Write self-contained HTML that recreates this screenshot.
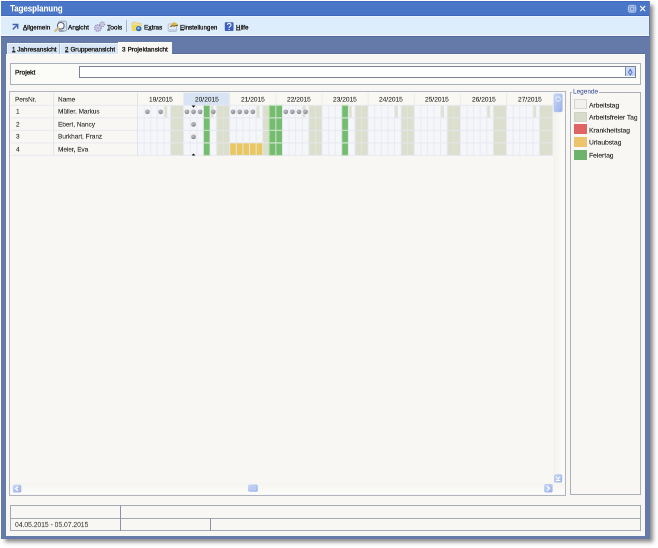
<!DOCTYPE html>
<html><head><meta charset="utf-8"><style>
*{margin:0;padding:0;box-sizing:border-box}
html,body{width:658px;height:548px;overflow:hidden;background:#fff;font-family:"Liberation Sans",sans-serif;color:#333}
.a{position:absolute}
.t{position:absolute;white-space:nowrap;transform-origin:0 0;-webkit-text-stroke:0.7px currentColor;will-change:transform}
.t2{-webkit-text-stroke:0.3px currentColor}
.t3{-webkit-text-stroke:0.2px currentColor}
u{text-decoration:underline;text-decoration-thickness:1.6px;text-underline-offset:0.4px;text-decoration-color:#333}
</style></head><body>
<div class="a" style="left:1.2px;top:1.2px;width:648.6px;height:537.6px;background:#657AA8;box-shadow:3px 3.5px 4px -0.5px rgba(40,40,40,0.55)"></div>
<div class="a" style="left:1.2px;top:1.2px;width:648.3px;height:14.7px;background:linear-gradient(#3F64B4 0,#4A76C8 1.2px,#4A76C8 13.5px,#3E64B0 14.9px)"></div>
<svg class="a" style="left:626px;top:3px" width="24" height="12" viewBox="0 0 24 12">
 <rect x="2.4" y="2.4" width="7.4" height="6.8" rx="1.4" fill="rgba(190,208,245,0.45)" stroke="#BCCDF0" stroke-width="1"/>
 <rect x="4.5" y="4.3" width="3.2" height="3" fill="#6E8CD4" stroke="#B8CAF0" stroke-width="0.9"/>
 <path d="M14.2 3 L19.2 8.2 M19.2 3 L14.2 8.2" stroke="#F4F7FF" stroke-width="1.15"/>
</svg>
<div class="a" style="left:1.2px;top:15.9px;width:648.3px;height:20.8px;background:linear-gradient(#F4F9FF 0,#DEEDFB 1.5px,#DEEDFB 18.2px,#F6FAFF 19.9px);border-bottom:0.7px solid #52689A"></div>
<div class="a" style="left:126.2px;top:19.6px;width:1px;height:12.8px;background:#A9B4C8"></div>
<svg class="a" style="left:0;top:0" width="260" height="36" viewBox="0 0 260 36">
<path d="M12.6 24.5 H17.7 V28.8" stroke="#4862B0" stroke-width="1.5" fill="none"/>
<path d="M12.8 29.4 L17.2 25" stroke="#4862B0" stroke-width="1.5" fill="none"/>
<rect x="58.4" y="21.2" width="8.3" height="9.8" rx="1.6" fill="#D6E2F0" stroke="#8E9CB2" stroke-width="0.9"/>
<circle cx="60.8" cy="25.8" r="3.3" fill="#F6F9FC" stroke="#5E6670" stroke-width="1.1"/>
<path d="M58.2 28.1 L55.2 31" stroke="#D4C080" stroke-width="2.2" stroke-linecap="round"/>
<path d="M59 31.1 H63.5" stroke="#6E7080" stroke-width="0.8"/>
<circle cx="102.2" cy="24.2" r="2.4" fill="#C9C5E2" stroke="#9690B8" stroke-width="1.1" stroke-dasharray="1 0.9"/>
<circle cx="97.9" cy="28" r="3.2" fill="#CCC8E8" stroke="#8C86AE" stroke-width="1.3" stroke-dasharray="1.1 0.9"/>
<circle cx="97.9" cy="28" r="1" fill="#B0AACC"/>
<path d="M131.8 23.5 Q132 22 133.5 22 H136 L137 23 H140.5 Q141.3 23 141.3 24 V30.5 H132.3Z" fill="#EEDC98" stroke="#D6BE70" stroke-width="0.5"/>
<path d="M131.7 25 H137.5 L136.5 31 H132.2Z" fill="#F2D858"/>
<circle cx="138.7" cy="28.6" r="2.6" fill="#2A62C0"/>
<circle cx="138.5" cy="28.3" r="1.2" fill="#7CCBF4"/>
<rect x="168.2" y="24" width="8.4" height="7.4" rx="0.6" fill="#E4ECF6" stroke="#A6B4CC" stroke-width="0.8"/>
<path d="M169.2 30 H176" stroke="#B8C8E0" stroke-width="1.4"/>
<path d="M170.2 26.5 Q172 22.3 174.6 22.2 Q176.8 22.5 178 25.2 Z" fill="#E2B440"/>
<path d="M170.2 26.6 L172.5 25.8 L174 26.2 L178 25.2" stroke="#5A4820" stroke-width="0.9" fill="none"/>
<rect x="224.8" y="22.3" width="8.7" height="8.7" rx="0.8" fill="#3D60BA"/>
<path d="M227.4 25 Q227.6 23.4 229.2 23.4 Q231 23.4 231 25 Q231 26.1 229.6 26.8 Q229.1 27.1 229.1 28" stroke="#E8F0FF" stroke-width="1.2" fill="none"/>
<rect x="228.5" y="28.9" width="1.2" height="1.2" fill="#E8F0FF"/>
</svg>
<div class="a" style="left:6px;top:54px;width:639px;height:481.5px;background:#F8F7F3;border-top:1px solid #FDFDFB;box-shadow:0 -0.7px 0 #55699A"></div>
<div class="a" style="left:6.5px;top:42.8px;width:53px;height:11.4px;background:#D9E6F6;border-top:1px solid #EEF4FB;border-left:1px solid #EEF4FB;border-right:1px solid #A9BAD6"></div>
<div class="a" style="left:59.5px;top:42.8px;width:58px;height:11.4px;background:#D9E6F6;border-top:1px solid #EEF4FB;border-left:1px solid #EEF4FB"></div>
<div class="a" style="left:117.5px;top:42px;width:54px;height:13.2px;background:#F8F7F3;border-top:1px solid #FCFCFA;border-left:1px solid #FCFCFA"></div>
<div class="a" style="left:9.5px;top:62.8px;width:631.5px;height:22.2px;border:1.3px solid #A9AFBB;background:#FBFBF8"></div>
<div class="a" style="left:78.9px;top:65.7px;width:557.6px;height:12.4px;border:1.9px solid #7A8194;background:#fff"></div>
<div class="a" style="left:625px;top:67.4px;width:9.6px;height:9px;background:linear-gradient(#D0DEF8,#BCCEF2);border-left:1.2px solid #7E8AA6"></div>
<svg class="a" style="left:0;top:0" width="658" height="90" viewBox="0 0 658 90"><path d="M630.3 68.6 L632.6 72.2 L630.3 75.8 L628 72.2 Z" fill="#4C6CC4"/><ellipse cx="630.3" cy="72.2" rx="1.1" ry="1.5" fill="#B4C8F2"/></svg>
<div class="a" style="left:9.2px;top:91.4px;width:556.4px;height:404.2px;border:1.6px solid #B0B5C0;background:#F8F7F3"></div>
<svg class="a" style="left:0;top:0" width="658" height="548" viewBox="0 0 658 548">
<defs><radialGradient id="dg" cx="0.4" cy="0.35" r="0.7"><stop offset="0" stop-color="#BEC0C4"/><stop offset="0.6" stop-color="#9A9CA0"/><stop offset="1" stop-color="#76797E"/></radialGradient></defs>
<rect x="10.8" y="92.8" width="126.7" height="12.50" fill="#F8F7F2"/>
<rect x="10.8" y="105.3" width="126.7" height="50.12" fill="#F8F7F3"/>
<line x1="53.6" y1="92.8" x2="53.6" y2="155.42" stroke="#E2E4EC" stroke-width="1"/>
<rect x="137.50" y="92.80" width="46.13" height="12.50" fill="#F9F8F3" />
<rect x="183.63" y="92.80" width="46.13" height="12.50" fill="#D8E3F3" />
<line x1="183.63" y1="92.8" x2="183.63" y2="105.3" stroke="#E8EAEE" stroke-width="0.9"/>
<rect x="229.76" y="92.80" width="46.13" height="12.50" fill="#F9F8F3" />
<line x1="229.76" y1="92.8" x2="229.76" y2="105.3" stroke="#E8EAEE" stroke-width="0.9"/>
<rect x="275.89" y="92.80" width="46.13" height="12.50" fill="#F9F8F3" />
<line x1="275.89" y1="92.8" x2="275.89" y2="105.3" stroke="#E8EAEE" stroke-width="0.9"/>
<rect x="322.02" y="92.80" width="46.13" height="12.50" fill="#F9F8F3" />
<line x1="322.02" y1="92.8" x2="322.02" y2="105.3" stroke="#E8EAEE" stroke-width="0.9"/>
<rect x="368.15" y="92.80" width="46.13" height="12.50" fill="#F9F8F3" />
<line x1="368.15" y1="92.8" x2="368.15" y2="105.3" stroke="#E8EAEE" stroke-width="0.9"/>
<rect x="414.28" y="92.80" width="46.13" height="12.50" fill="#F9F8F3" />
<line x1="414.28" y1="92.8" x2="414.28" y2="105.3" stroke="#E8EAEE" stroke-width="0.9"/>
<rect x="460.41" y="92.80" width="46.13" height="12.50" fill="#F9F8F3" />
<line x1="460.41" y1="92.8" x2="460.41" y2="105.3" stroke="#E8EAEE" stroke-width="0.9"/>
<rect x="506.54" y="92.80" width="46.13" height="12.50" fill="#F9F8F3" />
<line x1="506.54" y1="92.8" x2="506.54" y2="105.3" stroke="#E8EAEE" stroke-width="0.9"/>
<rect x="137.50" y="105.30" width="6.59" height="50.12" fill="#F5F6F9" />
<rect x="144.09" y="105.30" width="6.59" height="50.12" fill="#F5F6F9" />
<rect x="150.68" y="105.30" width="6.59" height="50.12" fill="#F5F6F9" />
<rect x="157.27" y="105.30" width="6.59" height="50.12" fill="#F5F6F9" />
<rect x="163.86" y="105.30" width="6.59" height="50.12" fill="#F5F6F9" />
<rect x="170.45" y="105.30" width="6.59" height="50.12" fill="#DCDFCE" />
<rect x="177.04" y="105.30" width="6.59" height="50.12" fill="#DCDFCE" />
<rect x="183.63" y="105.30" width="6.59" height="50.12" fill="#F5F6F9" />
<rect x="190.22" y="105.30" width="6.59" height="50.12" fill="#F5F6F9" />
<rect x="196.81" y="105.30" width="6.59" height="50.12" fill="#F5F6F9" />
<rect x="203.40" y="105.30" width="6.59" height="50.12" fill="#74BC6E" />
<rect x="209.99" y="105.30" width="6.59" height="50.12" fill="#F5F6F9" />
<rect x="216.58" y="105.30" width="6.59" height="50.12" fill="#DCDFCE" />
<rect x="223.17" y="105.30" width="6.59" height="50.12" fill="#DCDFCE" />
<rect x="229.76" y="105.30" width="6.59" height="50.12" fill="#F5F6F9" />
<rect x="236.35" y="105.30" width="6.59" height="50.12" fill="#F5F6F9" />
<rect x="242.94" y="105.30" width="6.59" height="50.12" fill="#F5F6F9" />
<rect x="249.53" y="105.30" width="6.59" height="50.12" fill="#F5F6F9" />
<rect x="256.12" y="105.30" width="6.59" height="50.12" fill="#F5F6F9" />
<rect x="262.71" y="105.30" width="6.59" height="50.12" fill="#DCDFCE" />
<rect x="269.30" y="105.30" width="6.59" height="50.12" fill="#74BC6E" />
<rect x="275.89" y="105.30" width="6.59" height="50.12" fill="#74BC6E" />
<rect x="282.48" y="105.30" width="6.59" height="50.12" fill="#F5F6F9" />
<rect x="289.07" y="105.30" width="6.59" height="50.12" fill="#F5F6F9" />
<rect x="295.66" y="105.30" width="6.59" height="50.12" fill="#F5F6F9" />
<rect x="302.25" y="105.30" width="6.59" height="50.12" fill="#F5F6F9" />
<rect x="308.84" y="105.30" width="6.59" height="50.12" fill="#DCDFCE" />
<rect x="315.43" y="105.30" width="6.59" height="50.12" fill="#DCDFCE" />
<rect x="322.02" y="105.30" width="6.59" height="50.12" fill="#F5F6F9" />
<rect x="328.61" y="105.30" width="6.59" height="50.12" fill="#F5F6F9" />
<rect x="335.20" y="105.30" width="6.59" height="50.12" fill="#F5F6F9" />
<rect x="341.79" y="105.30" width="6.59" height="50.12" fill="#74BC6E" />
<rect x="348.38" y="105.30" width="6.59" height="50.12" fill="#F5F6F9" />
<rect x="354.97" y="105.30" width="6.59" height="50.12" fill="#DCDFCE" />
<rect x="361.56" y="105.30" width="6.59" height="50.12" fill="#DCDFCE" />
<rect x="368.15" y="105.30" width="6.59" height="50.12" fill="#F5F6F9" />
<rect x="374.74" y="105.30" width="6.59" height="50.12" fill="#F5F6F9" />
<rect x="381.33" y="105.30" width="6.59" height="50.12" fill="#F5F6F9" />
<rect x="387.92" y="105.30" width="6.59" height="50.12" fill="#F5F6F9" />
<rect x="394.51" y="105.30" width="6.59" height="50.12" fill="#F5F6F9" />
<rect x="401.10" y="105.30" width="6.59" height="50.12" fill="#DCDFCE" />
<rect x="407.69" y="105.30" width="6.59" height="50.12" fill="#DCDFCE" />
<rect x="414.28" y="105.30" width="6.59" height="50.12" fill="#F5F6F9" />
<rect x="420.87" y="105.30" width="6.59" height="50.12" fill="#F5F6F9" />
<rect x="427.46" y="105.30" width="6.59" height="50.12" fill="#F5F6F9" />
<rect x="434.05" y="105.30" width="6.59" height="50.12" fill="#F5F6F9" />
<rect x="440.64" y="105.30" width="6.59" height="50.12" fill="#F5F6F9" />
<rect x="447.23" y="105.30" width="6.59" height="50.12" fill="#DCDFCE" />
<rect x="453.82" y="105.30" width="6.59" height="50.12" fill="#DCDFCE" />
<rect x="460.41" y="105.30" width="6.59" height="50.12" fill="#F5F6F9" />
<rect x="467.00" y="105.30" width="6.59" height="50.12" fill="#F5F6F9" />
<rect x="473.59" y="105.30" width="6.59" height="50.12" fill="#F5F6F9" />
<rect x="480.18" y="105.30" width="6.59" height="50.12" fill="#F5F6F9" />
<rect x="486.77" y="105.30" width="6.59" height="50.12" fill="#F5F6F9" />
<rect x="493.36" y="105.30" width="6.59" height="50.12" fill="#DCDFCE" />
<rect x="499.95" y="105.30" width="6.59" height="50.12" fill="#DCDFCE" />
<rect x="506.54" y="105.30" width="6.59" height="50.12" fill="#F5F6F9" />
<rect x="513.13" y="105.30" width="6.59" height="50.12" fill="#F5F6F9" />
<rect x="519.72" y="105.30" width="6.59" height="50.12" fill="#F5F6F9" />
<rect x="526.31" y="105.30" width="6.59" height="50.12" fill="#F5F6F9" />
<rect x="532.90" y="105.30" width="6.59" height="50.12" fill="#F5F6F9" />
<rect x="539.49" y="105.30" width="6.59" height="50.12" fill="#DCDFCE" />
<rect x="546.08" y="105.30" width="6.59" height="50.12" fill="#DCDFCE" />
<rect x="229.76" y="142.89" width="6.59" height="12.53" fill="#E9C862" />
<rect x="236.35" y="142.89" width="6.59" height="12.53" fill="#E9C862" />
<rect x="242.94" y="142.89" width="6.59" height="12.53" fill="#E9C862" />
<rect x="249.53" y="142.89" width="6.59" height="12.53" fill="#E9C862" />
<rect x="256.12" y="142.89" width="6.59" height="12.53" fill="#E9C862" />
<rect x="164.31" y="105.70" width="2.90" height="12.13" fill="#DFE1D3" />
<rect x="210.44" y="105.70" width="2.90" height="12.13" fill="#DFE1D3" />
<rect x="256.57" y="105.70" width="2.90" height="12.13" fill="#DFE1D3" />
<rect x="302.70" y="105.70" width="2.90" height="12.13" fill="#DFE1D3" />
<rect x="348.83" y="105.70" width="2.90" height="12.13" fill="#DFE1D3" />
<rect x="394.96" y="105.70" width="2.90" height="12.13" fill="#DFE1D3" />
<rect x="441.09" y="105.70" width="2.90" height="12.13" fill="#DFE1D3" />
<rect x="487.22" y="105.70" width="2.90" height="12.13" fill="#DFE1D3" />
<rect x="533.35" y="105.70" width="2.90" height="12.13" fill="#DFE1D3" />
<line x1="137.50" y1="105.3" x2="137.50" y2="155.42" stroke="#E5E8F1" stroke-width="0.8"/>
<line x1="144.09" y1="105.3" x2="144.09" y2="155.42" stroke="#E5E8F1" stroke-width="0.8"/>
<line x1="150.68" y1="105.3" x2="150.68" y2="155.42" stroke="#E5E8F1" stroke-width="0.8"/>
<line x1="157.27" y1="105.3" x2="157.27" y2="155.42" stroke="#E5E8F1" stroke-width="0.8"/>
<line x1="163.86" y1="105.3" x2="163.86" y2="155.42" stroke="#E5E8F1" stroke-width="0.8"/>
<line x1="170.45" y1="105.3" x2="170.45" y2="155.42" stroke="#E5E8F1" stroke-width="0.8"/>
<line x1="183.63" y1="105.3" x2="183.63" y2="155.42" stroke="#E5E8F1" stroke-width="0.8"/>
<line x1="190.22" y1="105.3" x2="190.22" y2="155.42" stroke="#E5E8F1" stroke-width="0.8"/>
<line x1="196.81" y1="105.3" x2="196.81" y2="155.42" stroke="#E5E8F1" stroke-width="0.8"/>
<line x1="203.40" y1="105.3" x2="203.40" y2="155.42" stroke="#E5E8F1" stroke-width="0.8"/>
<line x1="209.99" y1="105.3" x2="209.99" y2="155.42" stroke="#E5E8F1" stroke-width="0.8"/>
<line x1="216.58" y1="105.3" x2="216.58" y2="155.42" stroke="#E5E8F1" stroke-width="0.8"/>
<line x1="229.76" y1="105.3" x2="229.76" y2="155.42" stroke="#E5E8F1" stroke-width="0.8"/>
<line x1="236.35" y1="105.3" x2="236.35" y2="155.42" stroke="#E5E8F1" stroke-width="0.8"/>
<line x1="242.94" y1="105.3" x2="242.94" y2="155.42" stroke="#E5E8F1" stroke-width="0.8"/>
<line x1="249.53" y1="105.3" x2="249.53" y2="155.42" stroke="#E5E8F1" stroke-width="0.8"/>
<line x1="256.12" y1="105.3" x2="256.12" y2="155.42" stroke="#E5E8F1" stroke-width="0.8"/>
<line x1="262.71" y1="105.3" x2="262.71" y2="155.42" stroke="#E5E8F1" stroke-width="0.8"/>
<line x1="275.89" y1="105.3" x2="275.89" y2="155.42" stroke="#E5E8F1" stroke-width="0.8"/>
<line x1="282.48" y1="105.3" x2="282.48" y2="155.42" stroke="#E5E8F1" stroke-width="0.8"/>
<line x1="289.07" y1="105.3" x2="289.07" y2="155.42" stroke="#E5E8F1" stroke-width="0.8"/>
<line x1="295.66" y1="105.3" x2="295.66" y2="155.42" stroke="#E5E8F1" stroke-width="0.8"/>
<line x1="302.25" y1="105.3" x2="302.25" y2="155.42" stroke="#E5E8F1" stroke-width="0.8"/>
<line x1="308.84" y1="105.3" x2="308.84" y2="155.42" stroke="#E5E8F1" stroke-width="0.8"/>
<line x1="322.02" y1="105.3" x2="322.02" y2="155.42" stroke="#E5E8F1" stroke-width="0.8"/>
<line x1="328.61" y1="105.3" x2="328.61" y2="155.42" stroke="#E5E8F1" stroke-width="0.8"/>
<line x1="335.20" y1="105.3" x2="335.20" y2="155.42" stroke="#E5E8F1" stroke-width="0.8"/>
<line x1="341.79" y1="105.3" x2="341.79" y2="155.42" stroke="#E5E8F1" stroke-width="0.8"/>
<line x1="348.38" y1="105.3" x2="348.38" y2="155.42" stroke="#E5E8F1" stroke-width="0.8"/>
<line x1="354.97" y1="105.3" x2="354.97" y2="155.42" stroke="#E5E8F1" stroke-width="0.8"/>
<line x1="368.15" y1="105.3" x2="368.15" y2="155.42" stroke="#E5E8F1" stroke-width="0.8"/>
<line x1="374.74" y1="105.3" x2="374.74" y2="155.42" stroke="#E5E8F1" stroke-width="0.8"/>
<line x1="381.33" y1="105.3" x2="381.33" y2="155.42" stroke="#E5E8F1" stroke-width="0.8"/>
<line x1="387.92" y1="105.3" x2="387.92" y2="155.42" stroke="#E5E8F1" stroke-width="0.8"/>
<line x1="394.51" y1="105.3" x2="394.51" y2="155.42" stroke="#E5E8F1" stroke-width="0.8"/>
<line x1="401.10" y1="105.3" x2="401.10" y2="155.42" stroke="#E5E8F1" stroke-width="0.8"/>
<line x1="414.28" y1="105.3" x2="414.28" y2="155.42" stroke="#E5E8F1" stroke-width="0.8"/>
<line x1="420.87" y1="105.3" x2="420.87" y2="155.42" stroke="#E5E8F1" stroke-width="0.8"/>
<line x1="427.46" y1="105.3" x2="427.46" y2="155.42" stroke="#E5E8F1" stroke-width="0.8"/>
<line x1="434.05" y1="105.3" x2="434.05" y2="155.42" stroke="#E5E8F1" stroke-width="0.8"/>
<line x1="440.64" y1="105.3" x2="440.64" y2="155.42" stroke="#E5E8F1" stroke-width="0.8"/>
<line x1="447.23" y1="105.3" x2="447.23" y2="155.42" stroke="#E5E8F1" stroke-width="0.8"/>
<line x1="460.41" y1="105.3" x2="460.41" y2="155.42" stroke="#E5E8F1" stroke-width="0.8"/>
<line x1="467.00" y1="105.3" x2="467.00" y2="155.42" stroke="#E5E8F1" stroke-width="0.8"/>
<line x1="473.59" y1="105.3" x2="473.59" y2="155.42" stroke="#E5E8F1" stroke-width="0.8"/>
<line x1="480.18" y1="105.3" x2="480.18" y2="155.42" stroke="#E5E8F1" stroke-width="0.8"/>
<line x1="486.77" y1="105.3" x2="486.77" y2="155.42" stroke="#E5E8F1" stroke-width="0.8"/>
<line x1="493.36" y1="105.3" x2="493.36" y2="155.42" stroke="#E5E8F1" stroke-width="0.8"/>
<line x1="506.54" y1="105.3" x2="506.54" y2="155.42" stroke="#E5E8F1" stroke-width="0.8"/>
<line x1="513.13" y1="105.3" x2="513.13" y2="155.42" stroke="#E5E8F1" stroke-width="0.8"/>
<line x1="519.72" y1="105.3" x2="519.72" y2="155.42" stroke="#E5E8F1" stroke-width="0.8"/>
<line x1="526.31" y1="105.3" x2="526.31" y2="155.42" stroke="#E5E8F1" stroke-width="0.8"/>
<line x1="532.90" y1="105.3" x2="532.90" y2="155.42" stroke="#E5E8F1" stroke-width="0.8"/>
<line x1="539.49" y1="105.3" x2="539.49" y2="155.42" stroke="#E5E8F1" stroke-width="0.8"/>
<line x1="552.67" y1="105.3" x2="552.67" y2="155.42" stroke="#E5E8F1" stroke-width="0.8"/>
<line x1="10.5" y1="105.30" x2="552.67" y2="105.30" stroke="#E5E8F1" stroke-width="0.9"/>
<line x1="10.5" y1="117.83" x2="552.67" y2="117.83" stroke="#E5E8F1" stroke-width="0.9"/>
<line x1="10.5" y1="130.36" x2="552.67" y2="130.36" stroke="#E5E8F1" stroke-width="0.9"/>
<line x1="10.5" y1="142.89" x2="552.67" y2="142.89" stroke="#E5E8F1" stroke-width="0.9"/>
<line x1="10.5" y1="155.42" x2="552.67" y2="155.42" stroke="#E5E8F1" stroke-width="0.9"/>
<line x1="203.40" y1="105.30" x2="209.99" y2="105.30" stroke="#B8E0B0" stroke-width="0.9"/>
<line x1="203.40" y1="117.83" x2="209.99" y2="117.83" stroke="#B8E0B0" stroke-width="0.9"/>
<line x1="203.40" y1="130.36" x2="209.99" y2="130.36" stroke="#B8E0B0" stroke-width="0.9"/>
<line x1="203.40" y1="142.89" x2="209.99" y2="142.89" stroke="#B8E0B0" stroke-width="0.9"/>
<line x1="203.40" y1="155.42" x2="209.99" y2="155.42" stroke="#B8E0B0" stroke-width="0.9"/>
<line x1="275.89" y1="105.30" x2="282.48" y2="105.30" stroke="#B8E0B0" stroke-width="0.9"/>
<line x1="275.89" y1="117.83" x2="282.48" y2="117.83" stroke="#B8E0B0" stroke-width="0.9"/>
<line x1="275.89" y1="130.36" x2="282.48" y2="130.36" stroke="#B8E0B0" stroke-width="0.9"/>
<line x1="275.89" y1="142.89" x2="282.48" y2="142.89" stroke="#B8E0B0" stroke-width="0.9"/>
<line x1="275.89" y1="155.42" x2="282.48" y2="155.42" stroke="#B8E0B0" stroke-width="0.9"/>
<line x1="269.30" y1="105.30" x2="275.89" y2="105.30" stroke="#B8E0B0" stroke-width="0.9"/>
<line x1="269.30" y1="117.83" x2="275.89" y2="117.83" stroke="#B8E0B0" stroke-width="0.9"/>
<line x1="269.30" y1="130.36" x2="275.89" y2="130.36" stroke="#B8E0B0" stroke-width="0.9"/>
<line x1="269.30" y1="142.89" x2="275.89" y2="142.89" stroke="#B8E0B0" stroke-width="0.9"/>
<line x1="269.30" y1="155.42" x2="275.89" y2="155.42" stroke="#B8E0B0" stroke-width="0.9"/>
<line x1="341.79" y1="105.30" x2="348.38" y2="105.30" stroke="#B8E0B0" stroke-width="0.9"/>
<line x1="341.79" y1="117.83" x2="348.38" y2="117.83" stroke="#B8E0B0" stroke-width="0.9"/>
<line x1="341.79" y1="130.36" x2="348.38" y2="130.36" stroke="#B8E0B0" stroke-width="0.9"/>
<line x1="341.79" y1="142.89" x2="348.38" y2="142.89" stroke="#B8E0B0" stroke-width="0.9"/>
<line x1="341.79" y1="155.42" x2="348.38" y2="155.42" stroke="#B8E0B0" stroke-width="0.9"/>
<line x1="269.30" y1="105.3" x2="269.30" y2="155.42" stroke="#A6D89E" stroke-width="0.9"/>
<circle cx="147.38" cy="111.86" r="2.35" fill="url(#dg)"/>
<circle cx="160.56" cy="111.86" r="2.35" fill="url(#dg)"/>
<circle cx="186.92" cy="111.86" r="2.35" fill="url(#dg)"/>
<circle cx="193.51" cy="111.86" r="2.35" fill="url(#dg)"/>
<circle cx="200.10" cy="111.86" r="2.35" fill="url(#dg)"/>
<circle cx="213.28" cy="111.86" r="2.35" fill="url(#dg)"/>
<circle cx="233.05" cy="111.86" r="2.35" fill="url(#dg)"/>
<circle cx="239.64" cy="111.86" r="2.35" fill="url(#dg)"/>
<circle cx="246.23" cy="111.86" r="2.35" fill="url(#dg)"/>
<circle cx="252.82" cy="111.86" r="2.35" fill="url(#dg)"/>
<circle cx="285.78" cy="111.86" r="2.35" fill="url(#dg)"/>
<circle cx="292.37" cy="111.86" r="2.35" fill="url(#dg)"/>
<circle cx="298.95" cy="111.86" r="2.35" fill="url(#dg)"/>
<circle cx="305.55" cy="111.86" r="2.35" fill="url(#dg)"/>
<circle cx="193.51" cy="124.39" r="2.35" fill="url(#dg)"/>
<circle cx="193.51" cy="136.92" r="2.35" fill="url(#dg)"/>
<path d="M191.61 105.60 L195.41 105.60 L193.51 107.80Z" fill="#111"/>
<path d="M191.61 155.62 L195.41 155.62 L193.51 153.42Z" fill="#111"/>
<line x1="137.5" y1="92.8" x2="137.5" y2="155.42" stroke="#E2E4EC" stroke-width="1"/>
</svg>
<div class="a" style="left:552.8px;top:93px;width:11.5px;height:390px;background:linear-gradient(90deg,#F3F2EC,#FBFBF8)"></div>
<div class="a" style="left:11px;top:482.7px;width:553px;height:11.5px;background:linear-gradient(#F5F4EF,#FCFCFA)"></div>
<svg class="a" style="left:0;top:0" width="658" height="548" viewBox="0 0 658 548">
<defs><linearGradient id="sb" x1="0" y1="0" x2="1" y2="1"><stop offset="0" stop-color="#C8D6F8"/><stop offset="1" stop-color="#9AB0EA"/></linearGradient></defs>
<rect x="553.9" y="93.8" width="8.5" height="18.2" rx="1.5" fill="url(#sb)" stroke="#B4C4EC" stroke-width="0.4"/>
<circle cx="558.1" cy="98.9" r="2.9" fill="#DCE6FA" opacity="0.8"/>
<path d="M556.6 100 L558.1 98.3 L559.6 100" stroke="#7A92CC" stroke-width="0.7" fill="none"/>
<rect x="554" y="474.2" width="8.2" height="8.4" rx="1.5" fill="url(#sb)"/>
<path d="M555.9 476.6 L558.1 478.8 L560.3 476.6 M555.9 480.4 H560.3" stroke="#fff" stroke-width="1.1" fill="none"/>
<rect x="12.8" y="484.8" width="8.5" height="7.7" rx="1.5" fill="url(#sb)"/>
<path d="M18 486.4 L15.6 488.6 L18 490.8" stroke="#fff" stroke-width="1.3" fill="none"/>
<rect x="248.1" y="484.5" width="9.7" height="7.3" rx="1.5" fill="url(#sb)"/>
<rect x="249.8" y="486.2" width="6.3" height="4" fill="#C4D2F6"/>
<path d="M250.5 487.7 H255.4 M250.5 489.1 H255.4" stroke="#A8BAE8" stroke-width="0.5"/>
<rect x="544.1" y="484.1" width="8.5" height="8.5" rx="1.5" fill="url(#sb)"/>
<path d="M547 486 L549.4 488.3 L547 490.6" stroke="#fff" stroke-width="1.3" fill="none"/>
</svg>
<div class="a" style="left:569.8px;top:91.7px;width:71.2px;height:403.7px;border:1.5px solid #A9AEB8"></div>
<div class="a" style="left:571.5px;top:89px;width:27.5px;height:4px;background:#F8F7F3"></div>
<div class="a" style="left:573.8px;top:99.2px;width:13px;height:10px;background:#F1F1EE;border:0.8px solid #D6D6D0"></div>
<div class="a" style="left:573.8px;top:111.8px;width:13px;height:10px;background:#D8DCCB;border:0.8px solid #CED2C2"></div>
<div class="a" style="left:573.8px;top:124.4px;width:13px;height:10px;background:#E06464"></div>
<div class="a" style="left:573.8px;top:137px;width:13px;height:10px;background:#EBC46B"></div>
<div class="a" style="left:573.8px;top:149.6px;width:13px;height:10px;background:#6DB36C"></div>
<div class="a" style="left:9.6px;top:505.3px;width:631.2px;height:25.3px;border:1.15px solid #A2A8B4"></div>
<div class="a" style="left:10px;top:517.5px;width:631px;height:1.1px;background:#A2A8B4"></div>
<div class="a" style="left:120px;top:506px;width:1.2px;height:24.5px;background:#8A92A4"></div>
<div class="a" style="left:210px;top:518px;width:1.2px;height:12.5px;background:#8A92A4"></div>
<div class="t t3" style="left:10.10px;top:4.13px;font-size:18.60px;line-height:18.60px;color:#fff;font-weight:bold;transform:scale(0.4226,0.5)">Tagesplanung</div>
<div class="t" style="left:22.90px;top:23.93px;font-size:13.40px;line-height:13.40px;color:#1a1a1a;font-weight:normal;transform:scale(0.4605,0.5)"><u>A</u>llgemein</div>
<div class="t" style="left:68.00px;top:23.93px;font-size:13.40px;line-height:13.40px;color:#1a1a1a;font-weight:normal;transform:scale(0.4756,0.5)">An<u>s</u>icht</div>
<div class="t" style="left:106.50px;top:23.93px;font-size:13.40px;line-height:13.40px;color:#1a1a1a;font-weight:normal;transform:scale(0.4859,0.5)"><u>T</u>ools</div>
<div class="t" style="left:143.80px;top:23.93px;font-size:13.40px;line-height:13.40px;color:#1a1a1a;font-weight:normal;transform:scale(0.4819,0.5)">E<u>x</u>tras</div>
<div class="t" style="left:180.30px;top:23.93px;font-size:13.40px;line-height:13.40px;color:#1a1a1a;font-weight:normal;transform:scale(0.4648,0.5)"><u>E</u>instellungen</div>
<div class="t" style="left:236.10px;top:23.93px;font-size:13.40px;line-height:13.40px;color:#1a1a1a;font-weight:normal;transform:scale(0.4700,0.5)"><u>H</u>ilfe</div>
<div class="t" style="left:11.80px;top:46.23px;font-size:13.40px;line-height:13.40px;color:#1a1a1a;font-weight:normal;transform:scale(0.4741,0.5)"><u>1</u> Jahresansicht</div>
<div class="t" style="left:64.50px;top:46.23px;font-size:13.40px;line-height:13.40px;color:#1a1a1a;font-weight:normal;transform:scale(0.4736,0.5)"><u>2</u> Gruppenansicht</div>
<div class="t" style="left:122.10px;top:45.63px;font-size:13.40px;line-height:13.40px;color:#1a1a1a;font-weight:normal;transform:scale(0.4814,0.5)">3 Projektansicht</div>
<div class="t" style="left:14.80px;top:68.84px;font-size:13.60px;line-height:13.60px;color:#1a1a1a;font-weight:normal;transform:scale(0.4796,0.5)">Projekt</div>
<div class="t t2" style="left:14.70px;top:96.33px;font-size:13.40px;line-height:13.40px;color:#3a3a3a;font-weight:normal;transform:scale(0.4768,0.5)">PersNr.</div>
<div class="t t2" style="left:57.80px;top:96.33px;font-size:13.40px;line-height:13.40px;color:#3a3a3a;font-weight:normal;transform:scale(0.4812,0.5)">Name</div>
<div class="t t2" style="left:15.90px;top:108.13px;font-size:13.40px;line-height:13.40px;color:#3a3a3a;font-weight:normal;transform:scale(0.4830,0.5)">1</div>
<div class="t t2" style="left:57.80px;top:108.13px;font-size:13.40px;line-height:13.40px;color:#3a3a3a;font-weight:normal;transform:scale(0.4775,0.5)">Müller, Markus</div>
<div class="t t2" style="left:15.90px;top:120.66px;font-size:13.40px;line-height:13.40px;color:#3a3a3a;font-weight:normal;transform:scale(0.4830,0.5)">2</div>
<div class="t t2" style="left:57.80px;top:120.66px;font-size:13.40px;line-height:13.40px;color:#3a3a3a;font-weight:normal;transform:scale(0.4775,0.5)">Ebert, Nancy</div>
<div class="t t2" style="left:15.90px;top:133.19px;font-size:13.40px;line-height:13.40px;color:#3a3a3a;font-weight:normal;transform:scale(0.4830,0.5)">3</div>
<div class="t t2" style="left:57.80px;top:133.19px;font-size:13.40px;line-height:13.40px;color:#3a3a3a;font-weight:normal;transform:scale(0.4775,0.5)">Burkhart, Franz</div>
<div class="t t2" style="left:15.90px;top:145.72px;font-size:13.40px;line-height:13.40px;color:#3a3a3a;font-weight:normal;transform:scale(0.4830,0.5)">4</div>
<div class="t t2" style="left:57.80px;top:145.72px;font-size:13.40px;line-height:13.40px;color:#3a3a3a;font-weight:normal;transform:scale(0.4775,0.5)">Meier, Eva</div>
<div class="t t2" style="left:148.66px;top:96.44px;font-size:13.60px;line-height:13.60px;color:#3a3a3a;font-weight:normal;transform:scale(0.4841,0.5)">19/2015</div>
<div class="t t2" style="left:194.79px;top:96.44px;font-size:13.60px;line-height:13.60px;color:#3a3a3a;font-weight:normal;transform:scale(0.4841,0.5)">20/2015</div>
<div class="t t2" style="left:240.92px;top:96.44px;font-size:13.60px;line-height:13.60px;color:#3a3a3a;font-weight:normal;transform:scale(0.4841,0.5)">21/2015</div>
<div class="t t2" style="left:287.06px;top:96.44px;font-size:13.60px;line-height:13.60px;color:#3a3a3a;font-weight:normal;transform:scale(0.4841,0.5)">22/2015</div>
<div class="t t2" style="left:333.19px;top:96.44px;font-size:13.60px;line-height:13.60px;color:#3a3a3a;font-weight:normal;transform:scale(0.4841,0.5)">23/2015</div>
<div class="t t2" style="left:379.31px;top:96.44px;font-size:13.60px;line-height:13.60px;color:#3a3a3a;font-weight:normal;transform:scale(0.4841,0.5)">24/2015</div>
<div class="t t2" style="left:425.44px;top:96.44px;font-size:13.60px;line-height:13.60px;color:#3a3a3a;font-weight:normal;transform:scale(0.4841,0.5)">25/2015</div>
<div class="t t2" style="left:471.57px;top:96.44px;font-size:13.60px;line-height:13.60px;color:#3a3a3a;font-weight:normal;transform:scale(0.4841,0.5)">26/2015</div>
<div class="t t2" style="left:517.71px;top:96.44px;font-size:13.60px;line-height:13.60px;color:#3a3a3a;font-weight:normal;transform:scale(0.4841,0.5)">27/2015</div>
<div class="t t2" style="left:572.60px;top:88.04px;font-size:13.60px;line-height:13.60px;color:#4E64A8;font-weight:normal;transform:scale(0.4741,0.5)">Legende</div>
<div class="t t2" style="left:589.00px;top:101.64px;font-size:13.60px;line-height:13.60px;color:#2a2a2a;font-weight:normal;transform:scale(0.4930,0.5)">Arbeitstag</div>
<div class="t t2" style="left:589.00px;top:114.19px;font-size:13.60px;line-height:13.60px;color:#2a2a2a;font-weight:normal;transform:scale(0.4930,0.5)">Arbeitsfreier Tag</div>
<div class="t t2" style="left:589.00px;top:126.74px;font-size:13.60px;line-height:13.60px;color:#2a2a2a;font-weight:normal;transform:scale(0.4930,0.5)">Krankheitstag</div>
<div class="t t2" style="left:589.00px;top:139.29px;font-size:13.60px;line-height:13.60px;color:#2a2a2a;font-weight:normal;transform:scale(0.4930,0.5)">Urlaubstag</div>
<div class="t t2" style="left:589.00px;top:151.84px;font-size:13.60px;line-height:13.60px;color:#2a2a2a;font-weight:normal;transform:scale(0.4930,0.5)">Feiertag</div>
<div class="t t2" style="left:14.90px;top:520.59px;font-size:14.20px;line-height:14.20px;color:#585858;font-weight:normal;transform:scale(0.4743,0.5)">04.05.2015 - 05.07.2015</div>
</body></html>
